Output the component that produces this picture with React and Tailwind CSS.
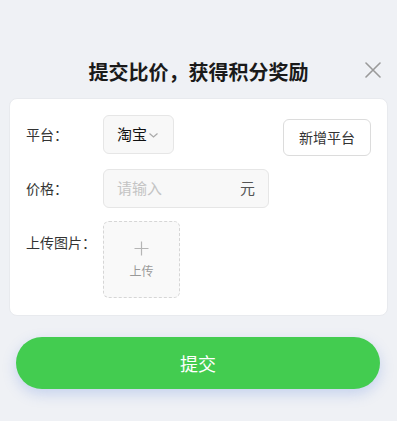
export default function App() {
  return (
    <div className="w-[397px] h-[421px] bg-[#eff1f5] overflow-hidden relative" style={{ fontFamily: '"Noto Sans CJK SC", "Noto Sans", sans-serif' }}>
      <div className="h-[98px] flex items-end justify-center pb-[14px]">
        <div className="text-[20px] leading-[24px] font-bold text-[#1a1a1a]">提交比价，获得积分奖励</div>
      </div>
      <button className="absolute left-[364px] top-[61px] w-[17px] h-[17px] flex items-center justify-center">
        <svg width="16" height="16" viewBox="0 0 16 16" fill="none" stroke="#9a9a9a" strokeWidth="1.6" strokeLinecap="round">
          <path d="M1 1L15 15M15 1L1 15" />
        </svg>
      </button>
      <div className="mx-[9px] bg-white rounded-[8px] border border-[#e8eaee] pt-[16px] pb-[17px] pl-[16px] pr-[16px] flex flex-col gap-[13px]">
        <div className="flex items-start">
          <div className="w-[77px] h-[39px] flex items-center text-[14px] text-[#333]">平台：</div>
          <div className="w-[71px] h-[39px] bg-[#f8f8f8] border border-[#e6e6e6] rounded-[6px] flex items-center pl-[13px] gap-[1px]">
            <span className="text-[15px] text-[#111]">淘宝</span>
            <svg width="11" height="8" viewBox="0 0 11 8" fill="none" stroke="#aaa" strokeWidth="1.2">
              <path d="M1.5 2.5L5.5 6L9.5 2.5" />
            </svg>
          </div>
          <div className="flex-1" />
          <button className="mt-[4px] w-[88px] h-[37px] border border-[#dcdcdc] rounded-[6px] bg-white text-[14px] text-[#333] flex items-center justify-center">新增平台</button>
        </div>
        <div className="flex items-start">
          <div className="w-[77px] h-[39px] flex items-center text-[14px] text-[#333]">价格：</div>
          <div className="w-[166px] h-[39px] bg-[#f8f8f8] border border-[#e6e6e6] rounded-[6px] flex items-center pl-[13px] pr-[13px] justify-between">
            <span className="text-[15px] text-[#c4c4c4]">请输入</span>
            <span className="text-[15px] text-[#555]">元</span>
          </div>
        </div>
        <div className="flex items-start">
          <div className="w-[77px] mt-[11px] leading-[20px] text-[14px] text-[#333]">上传图片：</div>
          <div className="w-[77px] h-[77px] bg-[#f9f9f9] border border-dashed border-[#d6d6d6] rounded-[6px] flex flex-col items-center pt-[19px]">
            <svg width="15" height="15" viewBox="0 0 15 15" fill="none" stroke="#b5b5b5" strokeWidth="1.2">
              <path d="M7.5 0.5V14.5M0.5 7.5H14.5" />
            </svg>
            <span className="mt-[7px] text-[12px] leading-[16px] text-[#999]">上传</span>
          </div>
        </div>
      </div>
      <button className="absolute left-[16px] top-[337px] w-[364px] h-[52px] rounded-full bg-[#43cc50] text-white text-[18px] flex items-center justify-center shadow-[0_5px_14px_rgba(90,130,220,0.28)]">提交</button>
    </div>
  );
}
